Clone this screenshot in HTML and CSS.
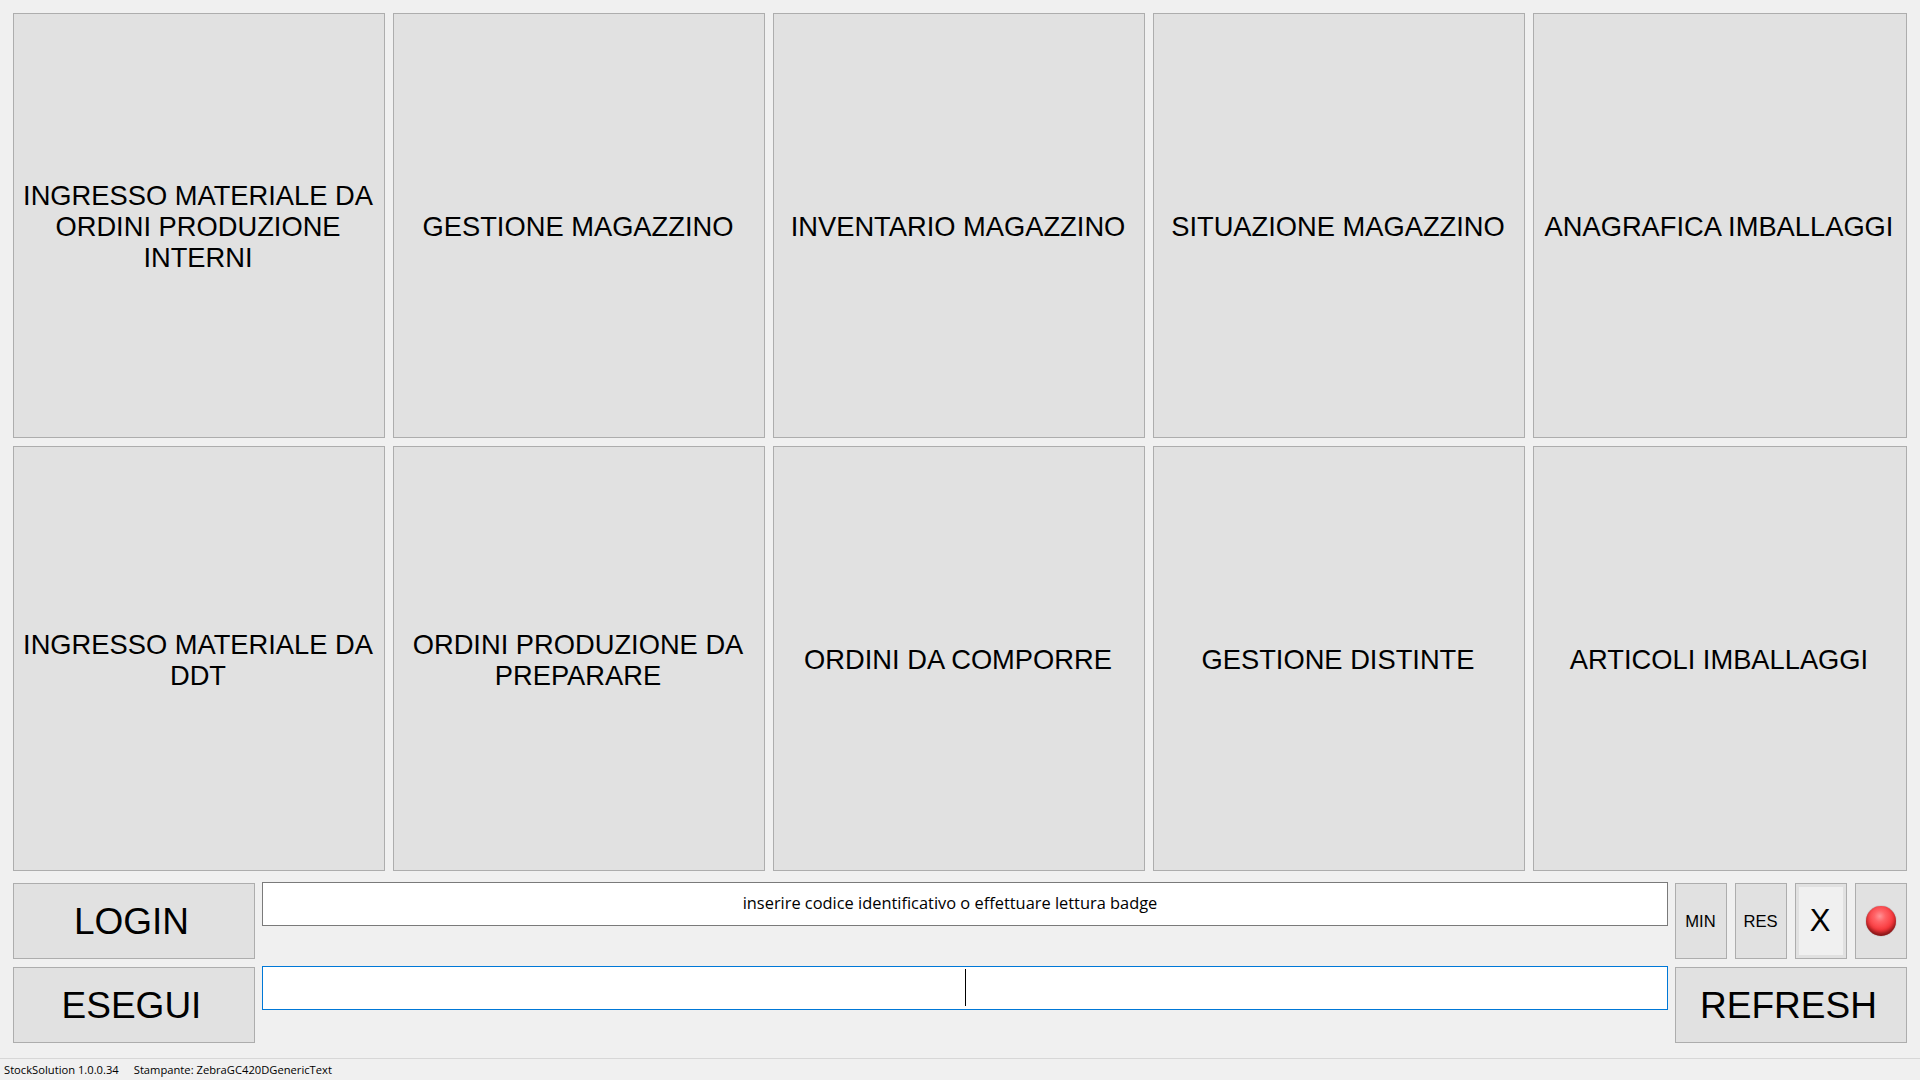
FILE: index.html
```html
<!DOCTYPE html>
<html lang="it">
<head>
<meta charset="utf-8">
<title>StockSolution</title>
<link rel="stylesheet" href="styles.css">
</head>
<body>
<div class="app">
  <main class="menu">
    <button class="btn tile">INGRESSO MATERIALE DA ORDINI PRODUZIONE INTERNI</button>
    <button class="btn tile">GESTIONE MAGAZZINO</button>
    <button class="btn tile">INVENTARIO MAGAZZINO</button>
    <button class="btn tile">SITUAZIONE MAGAZZINO</button>
    <button class="btn tile">ANAGRAFICA IMBALLAGGI</button>
    <button class="btn tile">INGRESSO MATERIALE DA DDT</button>
    <button class="btn tile">ORDINI PRODUZIONE DA PREPARARE</button>
    <button class="btn tile">ORDINI DA COMPORRE</button>
    <button class="btn tile">GESTIONE DISTINTE</button>
    <button class="btn tile">ARTICOLI IMBALLAGGI</button>
  </main>
  <section class="controls">
    <button class="btn big">LOGIN</button>
    <div class="field">inserire codice identificativo o effettuare lettura badge</div>
    <div class="tools">
      <button class="btn small">MIN</button>
      <button class="btn small">RES</button>
      <button class="btn close">X</button>
      <button class="btn lamp"><span class="orb"></span></button>
    </div>
    <button class="btn big">ESEGUI</button>
    <div class="field focus"><span class="caret"></span></div>
    <button class="btn big">REFRESH</button>
  </section>
  <footer class="status">
    <span>StockSolution 1.0.0.34</span>
    <span>Stampante: ZebraGC420DGenericText</span>
  </footer>
</div>
</body>
</html>
```
FILE: styles.css
```css
* { box-sizing: border-box; }
html, body { margin: 0; height: 100%; }
body {
  background: #f0f0f0;
  color: #000;
  font-family: "Liberation Sans", Arial, sans-serif;
  overflow: hidden;
}
.app {
  height: 1080px;
  display: flex;
  flex-direction: column;
}
.btn {
  margin: 0;
  padding: 0;
  background: #e1e1e1;
  border: 1px solid #adadad;
  color: #000;
  font-family: "Liberation Sans", Arial, sans-serif;
  display: flex;
  align-items: center;
  justify-content: center;
  text-align: center;
}
.menu {
  display: grid;
  grid-template-columns: repeat(4, 372px) 374px;
  grid-template-rows: 425px 425px;
  gap: 8px;
  padding: 13px 13px 0;
}
.tile {
  font-size: 27.3px;
  line-height: 31px;
  padding: 2px 6px 0 4px;
}
.controls {
  display: grid;
  grid-template-columns: 242px 1406px 232px;
  grid-template-rows: 76px 76px;
  column-gap: 7px;
  row-gap: 8px;
  padding: 12px 0 0 13px;
}
.big { font-size: 37px; padding: 1px 5px 0 0; }
.field {
  position: relative;
  height: 44px;
  margin-top: -1px;
  padding: 0 30px 4px 0;
  background: #fff;
  border: 1px solid #7a7a7a;
  font-family: "Open Sans", sans-serif;
  font-size: 16.4px;
  display: flex;
  align-items: center;
  justify-content: center;
}
.focus { border-color: #0078d7; }
.caret {
  position: absolute;
  left: 702px;
  top: 2px;
  width: 1px;
  height: 37px;
  background: #000;
}
.tools {
  display: grid;
  grid-template-columns: repeat(4, 52px);
  gap: 8px;
}
.small { font-size: 16.6px; padding: 2px 1px 0 0; }
.close {
  font-size: 31px;
  padding-right: 2px;
  background: #f0f0f0;
  box-shadow: inset 0 0 0 3px #e1e1e1;
}
.orb {
  width: 30px;
  height: 30px;
  border-radius: 50%;
  background: radial-gradient(circle at 46% 34%, #ff9497 0, #ff6266 22%, #f9383c 55%, #d82a2d 78%, #8a2022 100%);
  box-shadow: inset 0 -3px 4px rgba(50, 0, 0, 0.55), 0 0 1px #555;
}
.status {
  margin-top: 15px;
  flex: 1;
  border-top: 1px solid #d7d7d7;
  display: flex;
  align-items: center;
  gap: 15px;
  padding-left: 4px;
  font-family: "Open Sans", sans-serif;
  font-size: 11.2px;
}
```
